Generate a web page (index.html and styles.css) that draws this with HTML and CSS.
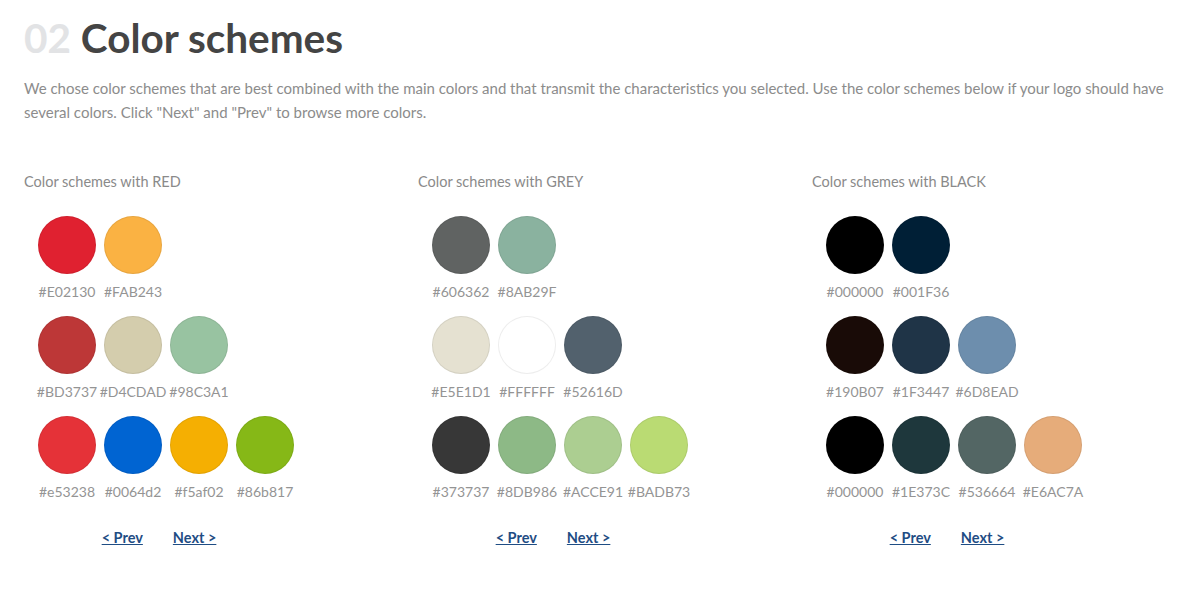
FILE: index.html
```html
<!DOCTYPE html>
<html lang="en">
<head>
<meta charset="utf-8">
<title>Color schemes</title>
<link rel="stylesheet" href="styles.css">
</head>
<body>
<section class="page">
  <h1 class="heading"><span class="num">02</span> Color schemes</h1>
  <p class="intro">We chose color schemes that are best combined with the main colors and that transmit the characteristics you selected. Use the color schemes below if your logo should have several colors. Click "Next" and "Prev" to browse more colors.</p>

  <div class="columns">
    <div class="column">
      <div class="col-title">Color schemes with RED</div>
      <div class="row">
        <div class="swatch"><span class="dot" style="background:#E02130"></span><span class="hex">#E02130</span></div>
        <div class="swatch"><span class="dot" style="background:#FAB243"></span><span class="hex">#FAB243</span></div>
      </div>
      <div class="row">
        <div class="swatch"><span class="dot" style="background:#BD3737"></span><span class="hex">#BD3737</span></div>
        <div class="swatch"><span class="dot" style="background:#D4CDAD"></span><span class="hex">#D4CDAD</span></div>
        <div class="swatch"><span class="dot" style="background:#98C3A1"></span><span class="hex">#98C3A1</span></div>
      </div>
      <div class="row">
        <div class="swatch"><span class="dot" style="background:#e53238"></span><span class="hex">#e53238</span></div>
        <div class="swatch"><span class="dot" style="background:#0064d2"></span><span class="hex">#0064d2</span></div>
        <div class="swatch"><span class="dot" style="background:#f5af02"></span><span class="hex">#f5af02</span></div>
        <div class="swatch"><span class="dot" style="background:#86b817"></span><span class="hex">#86b817</span></div>
      </div>
      <div class="pager"><a href="#">&lt; Prev</a><a href="#">Next &gt;</a></div>
    </div>

    <div class="column">
      <div class="col-title">Color schemes with GREY</div>
      <div class="row">
        <div class="swatch"><span class="dot" style="background:#606362"></span><span class="hex">#606362</span></div>
        <div class="swatch"><span class="dot" style="background:#8AB29F"></span><span class="hex">#8AB29F</span></div>
      </div>
      <div class="row">
        <div class="swatch"><span class="dot" style="background:#E5E1D1"></span><span class="hex">#E5E1D1</span></div>
        <div class="swatch"><span class="dot" style="background:#FFFFFF"></span><span class="hex">#FFFFFF</span></div>
        <div class="swatch"><span class="dot" style="background:#52616D"></span><span class="hex">#52616D</span></div>
      </div>
      <div class="row">
        <div class="swatch"><span class="dot" style="background:#373737"></span><span class="hex">#373737</span></div>
        <div class="swatch"><span class="dot" style="background:#8DB986"></span><span class="hex">#8DB986</span></div>
        <div class="swatch"><span class="dot" style="background:#ACCE91"></span><span class="hex">#ACCE91</span></div>
        <div class="swatch"><span class="dot" style="background:#BADB73"></span><span class="hex">#BADB73</span></div>
      </div>
      <div class="pager"><a href="#">&lt; Prev</a><a href="#">Next &gt;</a></div>
    </div>

    <div class="column">
      <div class="col-title">Color schemes with BLACK</div>
      <div class="row">
        <div class="swatch"><span class="dot" style="background:#000000"></span><span class="hex">#000000</span></div>
        <div class="swatch"><span class="dot" style="background:#001F36"></span><span class="hex">#001F36</span></div>
      </div>
      <div class="row">
        <div class="swatch"><span class="dot" style="background:#190B07"></span><span class="hex">#190B07</span></div>
        <div class="swatch"><span class="dot" style="background:#1F3447"></span><span class="hex">#1F3447</span></div>
        <div class="swatch"><span class="dot" style="background:#6D8EAD"></span><span class="hex">#6D8EAD</span></div>
      </div>
      <div class="row">
        <div class="swatch"><span class="dot" style="background:#000000"></span><span class="hex">#000000</span></div>
        <div class="swatch"><span class="dot" style="background:#1E373C"></span><span class="hex">#1E373C</span></div>
        <div class="swatch"><span class="dot" style="background:#536664"></span><span class="hex">#536664</span></div>
        <div class="swatch"><span class="dot" style="background:#E6AC7A"></span><span class="hex">#E6AC7A</span></div>
      </div>
      <div class="pager"><a href="#">&lt; Prev</a><a href="#">Next &gt;</a></div>
    </div>
  </div>
</section>
</body>
</html>
```

FILE: styles.css
```css
* { box-sizing: border-box; }

html, body {
  margin: 0;
  padding: 0;
  background: #ffffff;
}

body {
  font-family: Lato, "Open Sans", Arial, sans-serif;
  color: #8a8a8a;
}

.page {
  padding: 14px 24px 0 24px;
}

.heading {
  margin: 0;
  font-size: 40.5px;
  line-height: 48px;
  font-weight: 700;
  color: #444444;
  letter-spacing: 0;
}

.heading .num {
  color: #e2e3e5;
}

.intro {
  margin: 14px 0 0 0;
  font-size: 15px;
  line-height: 24px;
  color: #8c8c8c;
}

.columns {
  display: flex;
  margin-top: 48px;
}

.column {
  width: 394px;
  flex: none;
}

.col-title {
  font-size: 14.5px;
  line-height: 20px;
  color: #8a8a8a;
  margin-bottom: 24px;
}

.row {
  display: flex;
  gap: 8px;
  padding-left: 14px;
  height: 100px;
}

.swatch {
  width: 58px;
  display: flex;
  flex-direction: column;
  align-items: center;
}

.dot {
  display: block;
  width: 58px;
  height: 58px;
  border-radius: 50%;
  border: 1px solid rgba(0, 0, 0, 0.07);
}

.hex {
  margin-top: 8px;
  font-size: 14px;
  line-height: 20px;
  color: #949494;
  white-space: nowrap;
}

.pager {
  width: 270px;
  display: flex;
  justify-content: center;
  gap: 30px;
  margin-top: 12px;
}

.pager a {
  font-size: 14.5px;
  line-height: 20px;
  font-weight: 700;
  color: #1f4d84;
  text-decoration: underline;
}
```
